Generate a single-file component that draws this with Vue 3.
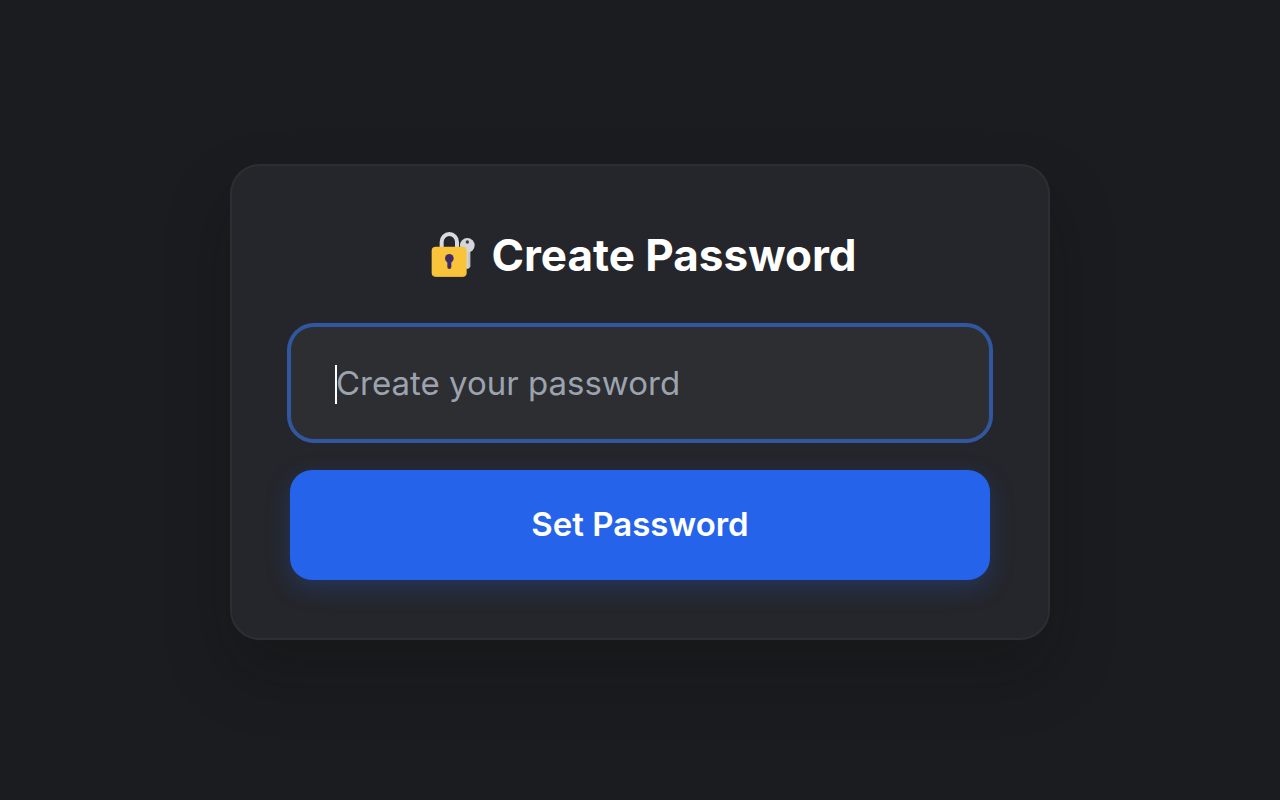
<script setup>
import { ref } from 'vue'

const password = ref('')
</script>

<template>
  <main class="page">
    <form class="card" @submit.prevent>
      <h1 class="title">
        <svg class="lock" viewBox="36 36 132 138" aria-hidden="true">
          <circle cx="145" cy="76" r="22" fill="#d5d6d9" />
          <path d="M134 92h20v48l-6 6h-14z" fill="#d5d6d9" />
          <path d="M150 97v44" stroke="#b4b5b9" stroke-width="3" />
          <circle cx="145" cy="66" r="5" fill="#3c3d43" />
          <path d="M68 86V66a23 24 0 0 1 46 0v20" fill="none" stroke="#d9dadd" stroke-width="12" />
          <rect x="38" y="80" width="105" height="90" rx="12" fill="#fac43a" />
          <path d="M42 163q4 6 10 6h77q8 0 12-6" fill="none" stroke="#eeb13a" stroke-width="3" />
          <circle cx="91" cy="115" r="13" fill="#402c6b" />
          <path d="M91 118v23" stroke="#402c6b" stroke-width="12" stroke-linecap="round" />
        </svg>
        <span>Create Password</span>
      </h1>
      <div class="field">
        <input
          v-model="password"
          class="input"
          type="password"
          placeholder="Create your password"
          aria-label="Create your password"
          autocomplete="new-password"
        />
        <span v-if="!password" class="caret" aria-hidden="true"></span>
      </div>
      <button class="submit" type="submit">Set Password</button>
    </form>
  </main>
</template>

<style>
body {
  margin: 0;
  background: #1b1c20;
}
</style>

<style scoped>
.page {
  min-height: 100vh;
  box-sizing: border-box;
  padding: 4px 24px 0;
  display: flex;
  align-items: center;
  justify-content: center;
  background: #1b1c20;
  font-family: Inter, "Liberation Sans", sans-serif;
}

.card {
  box-sizing: border-box;
  width: 100%;
  max-width: 820px;
  padding: 58px;
  border: 2px solid #2d2e34;
  border-radius: 30px;
  background: #25262b;
  box-shadow: 0 32px 64px rgba(10, 10, 0, 0.25);
}

.title {
  margin: 0 0 40px;
  padding-left: 8px;
  display: flex;
  align-items: center;
  justify-content: center;
  gap: 16px;
  color: #fff;
  font-size: 44px;
  line-height: 62px;
  font-weight: 700;
}

.lock {
  width: 44px;
  height: 46px;
  flex: none;
}

.field {
  position: relative;
  margin-bottom: 30px;
}

.input {
  display: block;
  box-sizing: border-box;
  width: 100%;
  height: 114px;
  padding: 0 45px;
  border: 1px solid #30579f;
  border-radius: 24px;
  outline: none;
  background: #2d2e32;
  box-shadow: 0 0 0 3px #30579f;
  color: #fff;
  font-family: inherit;
  font-size: 33px;
}

.input::placeholder {
  color: #9ca3af;
  opacity: 1;
}

.caret {
  position: absolute;
  top: 39px;
  left: 45px;
  width: 2px;
  height: 39px;
  background: #fff;
}

.submit {
  display: block;
  width: 100%;
  height: 110px;
  padding: 0 0 2px;
  border: 0;
  border-radius: 22px;
  background: #2563eb;
  box-shadow: 0 8px 24px rgba(37, 99, 235, 0.25);
  color: #fff;
  font-family: inherit;
  font-size: 33px;
  font-weight: 600;
  cursor: pointer;
}
</style>
